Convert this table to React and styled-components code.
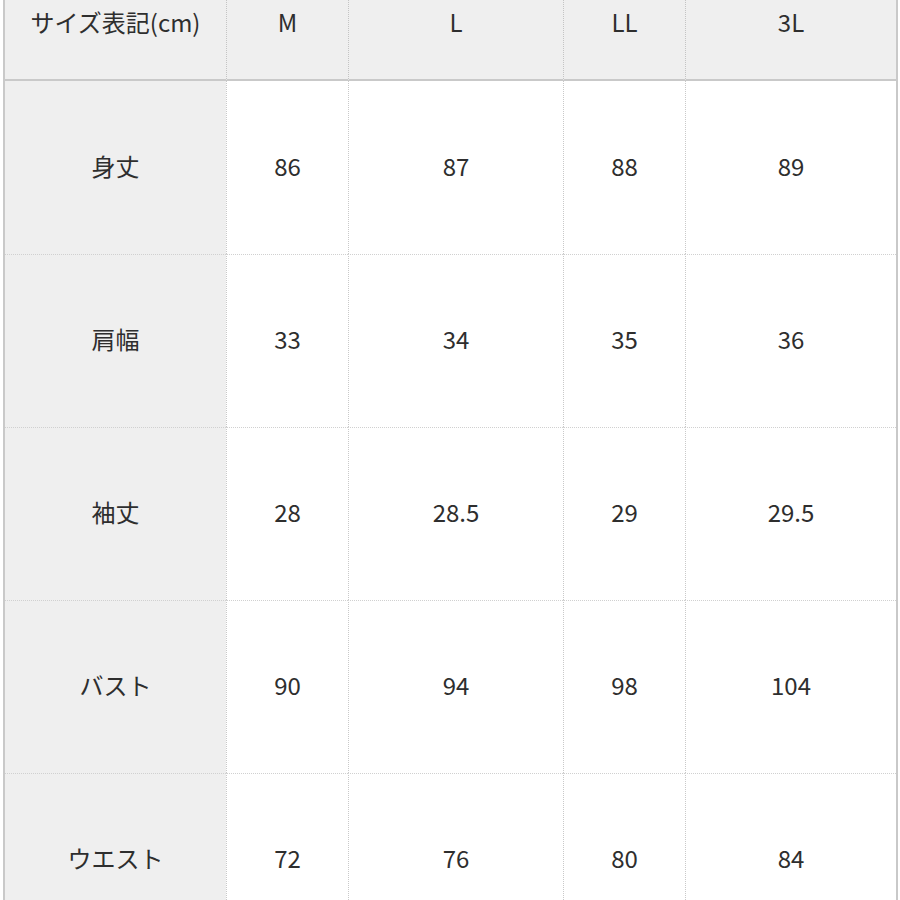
import React from 'react';
import styled, { createGlobalStyle } from 'styled-components';

const GlobalStyle = createGlobalStyle`
    html, body {
        margin: 0;
        padding: 0;
        background: #fff;
    }
    body {
        font-family: "Noto Sans CJK JP", "Noto Sans", sans-serif;
        color: #2e2e2e;
    }
`

const Page = styled.div`
    width: 900px;
    height: 900px;
    overflow: hidden;
`

const TableWrapper = styled.div`
    margin-left: 3px;
    width: 891px;
    border-left: 2px solid #c9c9c9;
    border-right: 2px solid #c9c9c9;
    display: grid;
    grid-template-columns: 221px 122px 215px 122px 211px;
`

const HeadCell = styled.div`
    height: 81px;
    box-sizing: border-box;
    background: #efefef;
    border-bottom: 2px solid #c9c9c9;
    border-left: ${p => (p.$first ? 'none' : '1px dotted #c4c4c4')};
    display: flex;
    justify-content: center;
    align-items: flex-start;
    padding-top: 4px;
    font-size: 24px;
    line-height: 36px;
`

const BodyCell = styled.div`
    height: 173px;
    box-sizing: border-box;
    background: ${p => (p.$label ? '#efefef' : '#fff')};
    border-left: ${p => (p.$label ? 'none' : '1px dotted #c9c9c9')};
    border-top: ${p => (p.$top ? 'none' : '1px dotted #d0d0d0')};
    display: flex;
    justify-content: center;
    align-items: center;
    font-size: 24px;
    padding-bottom: 5px;
`

const sizes = ['M', 'L', 'LL', '3L']

const rows = [
    { label: '身丈', values: ['86', '87', '88', '89'] },
    { label: '肩幅', values: ['33', '34', '35', '36'] },
    { label: '袖丈', values: ['28', '28.5', '29', '29.5'] },
    { label: 'バスト', values: ['90', '94', '98', '104'] },
    { label: 'ウエスト', values: ['72', '76', '80', '84'] },
]

const App = () => {
    return (
        <Page>
            <GlobalStyle />
            <TableWrapper>
                <HeadCell $first>サイズ表記(cm)</HeadCell>
                {sizes.map(s => (
                    <HeadCell key={s}>{s}</HeadCell>
                ))}
                {rows.map((row, i) => (
                    <React.Fragment key={row.label}>
                        <BodyCell $label $top={i === 0}>{row.label}</BodyCell>
                        {row.values.map((v, j) => (
                            <BodyCell key={j} $top={i === 0}>{v}</BodyCell>
                        ))}
                    </React.Fragment>
                ))}
            </TableWrapper>
        </Page>
    );
};

export default App;
